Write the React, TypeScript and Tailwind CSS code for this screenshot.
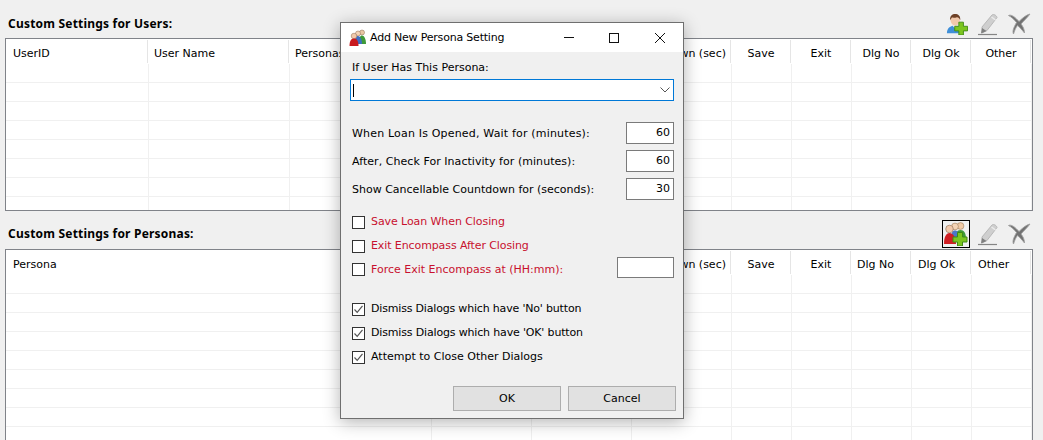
import React from "react";

const font = "font-['DejaVu_Sans',sans-serif]";

const UserAdd = () => (
  <svg width="22" height="22" viewBox="0 0 24 24" className="block mr-[3px]">
    <path d="M1 22c0-5 3-7 6-8h5c3 1 4 3 4 8z" fill="#3f8fd8" />
    <path d="M7 14l3 3 3-3-1-2H8z" fill="#e8eef5" />
    <ellipse cx="10" cy="8" rx="5" ry="5.6" fill="#f1c9ac" />
    <path d="M4.500 8C4 3 7 1 10 1s6.200 2 5.500 7c-.8-2.500-2-3.500-3.500-3.500-2 .8-4 .8-5.500.5C5.500 6 5 7 4.500 8z" fill="#6d4026" />
    <path d="M14 10h5v4.500h4.500v5H19V24h-5v-4.500H9.500v-5H14z" fill="#7cc520" stroke="#3f8a14" strokeWidth="1" />
  </svg>
);

const PersonaAdd = () => (
  <svg width="24" height="24" viewBox="0 0 24 24" className="block">
    <circle cx="16.500" cy="4" r="3.400" fill="#efc9a6" stroke="#9a7a5a" strokeWidth=".6" />
    <path d="M11 17c0-6 2-9 5.500-9s5.500 3 5.500 9z" fill="#3f9a3a" />
    <circle cx="11" cy="4.500" r="3.400" fill="#f3d3b6" stroke="#9a7a5a" strokeWidth=".6" />
    <path d="M7 17c0-6 1.500-8.500 4-8.500s5 2.500 5 8.500z" fill="#4a78c8" />
    <circle cx="5.500" cy="7" r="3.800" fill="#f1c9ac" stroke="#8a6a50" strokeWidth=".6" />
    <path d="M0 22c0-7 2-11 5.500-11s6.500 4 6.500 11z" fill="#cf1f24" />
    <path d="M13.500 10.500h5V15H23v5h-4.500v4h-5v-4H9v-5h4.500z" fill="#7cc520" stroke="#3f8a14" strokeWidth="1" />
  </svg>
);

const TitleIcon = () => (
  <svg width="18" height="18" viewBox="0 0 18 18" className="block">
    <circle cx="13" cy="3.500" r="2.500" fill="#e9c6a4" stroke="#8a6a50" strokeWidth=".5" />
    <path d="M10 15c0-6 1-8.500 3-8.500s4 3 4 8.500z" fill="#3f9a3a" />
    <circle cx="9" cy="4.500" r="2.500" fill="#f3d3b6" stroke="#8a6a50" strokeWidth=".5" />
    <path d="M5.500 15c0-6 1.500-8 3.500-8s4 3 4 8z" fill="#3e6fc4" />
    <circle cx="5" cy="7" r="2.800" fill="#f1c9ac" stroke="#8a6a50" strokeWidth=".5" />
    <path d="M0.500 17c0-5 1.500-7.500 4.500-7.500s4.500 2.500 4.500 7.500z" fill="#c81a1f" />
  </svg>
);

const Pencil = () => (
  <svg width="24" height="24" viewBox="0 0 24 24" className="block">
    <path d="M5 15L15 3c1.500-1.300 4.500.3 5 2.500L10 18.500l-5 2.500z" fill="#cfcfcf" stroke="#b8b8b8" strokeWidth="1" />
    <path d="M14.500 5l4 3" stroke="#ececec" strokeWidth="1.500" />
    <path d="M4 21.500l1-5.500 4.500 3z" fill="#7f7f7f" />
    <path d="M1 22.500h19" stroke="#858585" strokeWidth="1.200" />
  </svg>
);

const XMark = () => (
  <svg width="24" height="22" viewBox="0 0 24 22" className="block">
    <path d="M1.500 2.500c3-1.500 7 2 10.500 6 3.500-3.500 7-6.500 11-7.500-2.500 3.500-6.500 7-9 10 2 2.500 3.500 5.500 3.500 9-2.500-3-4.500-5.500-7-7.500C8.500 15 7.500 18 6.500 21c-1.500-3 .5-7 3-11.500C7 6.500 4.500 4 1.500 2.500z" fill="#727272" stroke="#a0a0a0" strokeWidth=".9" />
  </svg>
);

type Col = { t: string; w: number; cls: string };

const usersCols: Col[] = [
  { t: "UserID", w: 143, cls: "pl-[7px]" },
  { t: "User Name", w: 141, cls: "pl-[5px]" },
  { t: "Personas", w: 142, cls: "pl-[5px]" },
  { t: "", w: 100, cls: "text-center" },
  { t: "", w: 100, cls: "text-center" },
  { t: "Countdown (sec)", w: 100, cls: "text-center pr-[3px]" },
  { t: "Save", w: 60, cls: "text-center" },
  { t: "Exit", w: 60, cls: "text-center" },
  { t: "Dlg No", w: 60, cls: "text-center" },
  { t: "Dlg Ok", w: 60, cls: "text-center" },
  { t: "Other", w: 60, cls: "text-center" },
];

const personaCols: Col[] = [
  { t: "Persona", w: 426, cls: "pl-[7px]" },
  { t: "", w: 100, cls: "text-center" },
  { t: "", w: 100, cls: "text-center" },
  { t: "Countdown (sec)", w: 100, cls: "text-center pr-[3px]" },
  { t: "Save", w: 60, cls: "text-center" },
  { t: "Exit", w: 60, cls: "text-center" },
  { t: "Dlg No", w: 60, cls: "pl-[5px]" },
  { t: "Dlg Ok", w: 60, cls: "pl-[6px]" },
  { t: "Other", w: 60, cls: "pl-[6px]" },
];

function Grid({ cols, rows, height }: { cols: Col[]; rows: number; height: string }) {
  return (
    <div className={`mx-[5px] w-[1028px] border border-[#808389] bg-white overflow-hidden ${height}`}>
      <div className="flex h-[25px]">
        {cols.map((c, i) => (
          <div key={i} className="flex h-[24px] shrink-0" style={{ width: c.w }}>
            <div className={`flex-1 min-w-0 whitespace-nowrap overflow-hidden text-[11px] pt-[2px] leading-[25px] text-black ${c.cls}`}>{c.t}</div>
            <div className="w-[1px] mr-[1px] mt-[1px] bg-[#e5e5e5]" />
          </div>
        ))}
      </div>
      {Array.from({ length: rows }).map((_, r) => (
        <div key={r} className="flex h-[19px] border-b border-[#f0f0f0]">
          {cols.map((c, i) => (
            <div key={i} className="shrink-0 border-r border-[#f0f0f0]" style={{ width: c.w }} />
          ))}
        </div>
      ))}
    </div>
  );
}

const Check = ({ on }: { on?: boolean }) => (
  <div className="w-[13px] h-[13px] border border-[#333333] bg-white shrink-0 flex items-center justify-center">
    {on && (
      <svg width="11" height="11" viewBox="0 0 11 11" className="block">
        <path d="M1.500 5.500L4.200 8.300 9.500 1.800" fill="none" stroke="#555555" strokeWidth="1.200" />
      </svg>
    )}
  </div>
);

const CheckRow = ({ label, on, red, cls = "" }: { label: string; on?: boolean; red?: boolean; cls?: string }) => (
  <div className="flex items-center gap-[6px] h-[24px]">
    <Check on={on} />
    <span className={`${red ? "text-[#c8102e]" : "text-black"} ${cls}`}>{label}</span>
  </div>
);

const NumRow = ({ label, value, cls, track = "" }: { label: string; value: string; cls: string; track?: string }) => (
  <div className={`flex items-center justify-between pr-[9px] h-[22px] ${cls}`}>
    <span className={`pt-[2px] ${track}`}>{label}</span>
    <div className="w-[48px] h-[22px] border border-[#7a7a7a] bg-white text-right pr-[3px] leading-[20px]">{value}</div>
  </div>
);

const Heading = ({ children }: { children: React.ReactNode }) => (
  <span className="font-['Noto_Sans',sans-serif] font-bold text-[12px] tracking-[0.2px]">{children}</span>
);

export default function App() {
  return (
    <div className={`relative w-[1043px] h-[440px] overflow-hidden bg-[#f0f0f0] text-[11px] text-black ${font}`}>
      <div className="flex items-center justify-between h-[38px] pt-[9px] pl-[8px] pr-[12px]">
        <Heading>Custom Settings for Users:</Heading>
        <div className="flex items-center gap-[6px]">
          <UserAdd />
          <Pencil />
          <XMark />
        </div>
      </div>
      <Grid cols={usersCols} rows={8} height="h-[173px]" />
      <div className="flex items-center justify-between h-[38px] pt-[7px] pl-[8px] pr-[12px]">
        <Heading>Custom Settings for Personas:</Heading>
        <div className="flex items-center gap-[6px]">
          <div className="w-[28px] h-[28px] border border-black flex items-center justify-center mr-[1px]">
            <PersonaAdd />
          </div>
          <Pencil />
          <XMark />
        </div>
      </div>
      <Grid cols={personaCols} rows={9} height="h-[200px]" />

      <div className="absolute left-[340px] top-[22px] w-[344px] h-[397px] border border-[#6f6f6f] bg-[#f0f0f0] shadow-[0_3px_16px_rgba(0,0,0,0.3)]">
        <div className="flex items-center h-[29px] bg-white pl-[8px]">
          <TitleIcon />
          <span className="ml-[3px] flex-1 pt-[1px] tracking-[-0.2px]">Add New Persona Setting</span>
          <svg width="112" height="12" viewBox="0 0 112 12" className="block mr-[7px]">
            <path d="M0 5.500h10" stroke="#111" />
            <rect x="45.500" y="1.500" width="9" height="9" fill="none" stroke="#111" />
            <path d="M91 1l10 10M101 1L91 11" stroke="#111" />
          </svg>
        </div>
        <div className="pl-[11px]">
          <div className="pt-[8px] h-[24px] leading-[16px]">If User Has This Persona:</div>
          <div className="-ml-[2px] mt-[3px] w-[324px] h-[22px] border border-[#0078d7] bg-white flex items-center justify-between pl-[2px] pr-[3px]">
            <div className="w-[1px] h-[13px] bg-black" />
            <svg width="10" height="6" viewBox="0 0 10 6" className="block">
              <path d="M.5.500L5 5 9.500.500" fill="none" stroke="#555" />
            </svg>
          </div>
          <NumRow cls="mt-[21px]" track="tracking-[0.18px]" label="When Loan Is Opened, Wait for (minutes):" value="60" />
          <NumRow cls="mt-[6px]" track="tracking-[0.05px]" label="After, Check For Inactivity for (minutes):" value="60" />
          <NumRow cls="mt-[6px]" label="Show Cancellable Countdown for (seconds):" value="30" />
          <div className="mt-[10px]">
            <CheckRow red label="Save Loan When Closing" cls="tracking-[-0.08px]" />
            <CheckRow red label="Exit Encompass After Closing" cls="tracking-[-0.1px]" />
            <div className="flex items-center justify-between pr-[9px] h-[22px]">
              <div className="flex items-center gap-[6px]">
                <Check />
                <span className="text-[#c8102e] pt-[2px]">Force Exit Encompass at (HH:mm):</span>
              </div>
              <div className="w-[57px] h-[21px] -mt-[3px] border border-[#7a7a7a] bg-white" />
            </div>
          </div>
          <div className="mt-[17px]">
            <CheckRow on label="Dismiss Dialogs which have 'No' button" cls="tracking-[-0.18px]" />
            <CheckRow on label="Dismiss Dialogs which have 'OK' button" cls="tracking-[-0.16px]" />
            <CheckRow on label="Attempt to Close Other Dialogs" />
          </div>
          <div className="mt-[17px] flex justify-end gap-[7px] pr-[7px]">
            <div className="w-[108px] h-[25px] border border-[#adadad] bg-[#e1e1e1] text-center leading-[23px]">OK</div>
            <div className="w-[108px] h-[25px] border border-[#adadad] bg-[#e1e1e1] text-center leading-[23px]">Cancel</div>
          </div>
        </div>
      </div>
    </div>
  );
}
